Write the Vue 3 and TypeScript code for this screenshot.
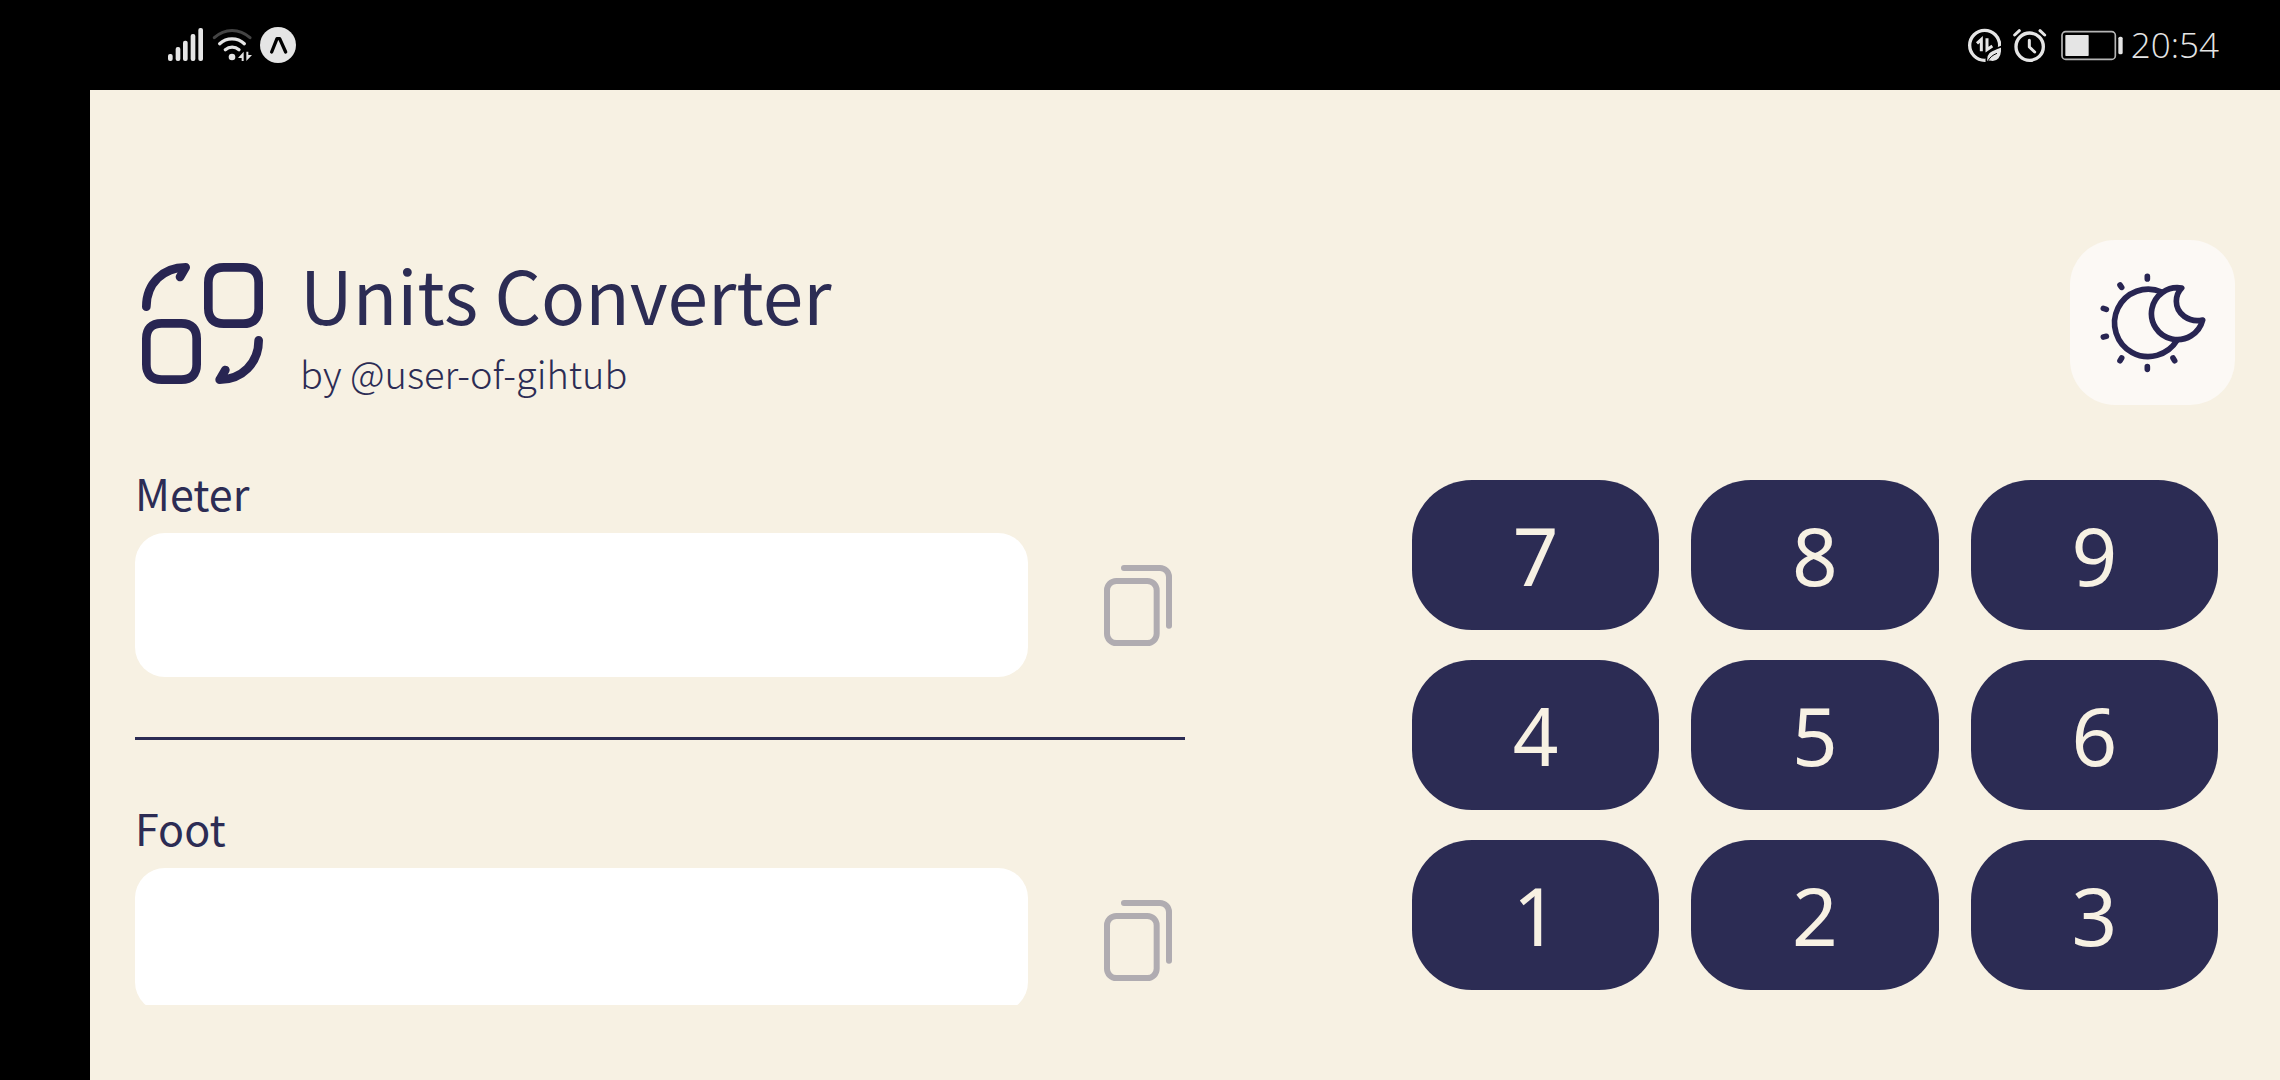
<script setup lang="ts">
import { ref } from 'vue'

interface Unit {
  id: string
  name: string
  factor: number
}

const units: Unit[] = [
  { id: 'meter', name: 'Meter', factor: 1 },
  { id: 'foot', name: 'Foot', factor: 0.3048 },
]

const keys: string[] = ['7', '8', '9', '4', '5', '6', '1', '2', '3']

const values = ref<Record<string, string>>({ meter: '', foot: '' })

function press(key: string): void {
  values.value.meter += key
  const meters = Number(values.value.meter)
  values.value.foot = String(meters / units[1].factor)
}

function copy(id: string): void {
  navigator.clipboard?.writeText(values.value[id])
}
</script>

<template>
  <div class="screen">
    <div class="status">
      <div class="status-group">
        <svg width="35" height="36" viewBox="54 51 105 108" fill="#e5e5e5" role="img" aria-label="Signal">
          <rect x="54" y="132" width="14" height="21" rx="6" />
          <rect x="77" y="111" width="14" height="42" rx="6" />
          <rect x="99" y="92" width="14" height="61" rx="6" />
          <rect x="122" y="72" width="14" height="81" rx="6" />
          <rect x="145" y="54" width="14" height="99" rx="6" />
        </svg>
        <svg width="41" height="36" viewBox="183 51 123 108" fill="none" stroke-linecap="round" role="img" aria-label="Wi-Fi">
          <path d="M193 83C224 54 268 54 300 83" stroke="#444" stroke-width="9" />
          <path d="M209 101C230 82 262 82 283 101" stroke="#e5e5e5" stroke-width="10" />
          <path d="M226 119C238 109 255 109 267 119" stroke="#e5e5e5" stroke-width="10" />
          <circle cx="246" cy="141" r="10" fill="#e5e5e5" />
          <path d="M281 125V153H275V144H264ZM289 125H295V135H306L289 153Z" fill="#e5e5e5" />
        </svg>
        <svg width="36" height="36" viewBox="330 51 108 108" fill="none" role="img" aria-label="Expo">
          <circle cx="384" cy="105" r="54" fill="#e5e5e5" />
          <path d="M365 126L381 86H389L407 126" stroke="#000" stroke-width="10" stroke-linecap="round" stroke-linejoin="round" />
        </svg>
      </div>
      <div class="status-group">
        <div class="indicators">
          <svg width="34" height="36" viewBox="78 51 102 108" fill="none" role="img" aria-label="Data saver">
            <circle cx="131" cy="106" r="45" stroke="#e5e5e5" stroke-width="10" />
            <path d="M108 100L121 88V124" stroke="#e5e5e5" stroke-width="9" />
            <path d="M138 85V119L154 108" stroke="#e5e5e5" stroke-width="9" />
            <path d="M137 158C130 122 160 120 182 109C186 142 170 160 146 154Z" fill="#e5e5e5" stroke="#000" stroke-width="5" />
            <path d="M139 156C146 142 155 135 168 130" stroke="#000" stroke-width="3" />
          </svg>
          <svg width="34" height="36" viewBox="216 51 102 108" fill="none" stroke="#e5e5e5" stroke-linecap="round" role="img" aria-label="Alarm">
            <circle cx="266" cy="110" r="41" stroke-width="10" />
            <path d="M221 75L235 62M297 62L311 75" stroke-width="9" />
            <path d="M265 91V111L281 126" stroke-width="9" stroke-linejoin="round" />
          </svg>
          <svg width="64" height="36" viewBox="354 51 192 108" role="img" aria-label="Battery">
            <rect x="363" y="65" width="160" height="83" rx="11" fill="none" stroke="#b5b5b5" stroke-width="5" />
            <rect x="373" y="75" width="70" height="63" rx="2" fill="#e5e5e5" />
            <rect x="532" y="80" width="13" height="53" rx="5" fill="#e5e5e5" />
          </svg>
        </div>
        <time class="clock">20:54</time>
      </div>
    </div>

    <div class="body">
      <div class="rail"></div>
      <main class="app">
        <header class="header">
          <svg class="logo" viewBox="66 69 363 363" fill="none" stroke="#282552" stroke-width="26" stroke-linecap="round" stroke-linejoin="round" aria-hidden="true">
            <path d="M79 200C79 130 130 82 197 82L180 111" />
            <path d="M416 301C416 370 365 419 299 419L316 390" />
            <path d="M311 82H370C401 82 416 99 416 128V205C416 234 401 251 370 251H311C280 251 265 234 265 205V128C265 99 280 82 311 82Z" />
            <path d="M125 250H184C215 250 230 267 230 296V373C230 402 215 419 184 419H125C94 419 79 402 79 373V296C79 267 94 250 125 250Z" />
          </svg>
          <div class="titles">
            <h1>Units Converter</h1>
            <p>by @user-of-gihtub</p>
          </div>
          <button class="theme" type="button" aria-label="Toggle theme">
            <svg width="106" height="100" viewBox="149 158 318 300" fill="none" stroke="#282552" stroke-width="17" stroke-linecap="round" stroke-linejoin="round" aria-hidden="true">
              <path d="M334 215A101 101 0 1 0 380 360" />
              <path d="M394 203A78 78 0 1 0 457 299C415 308 378 280 378 243C378 227 384 213 394 203Z" />
              <path d="M291 168V176M291 439V447M209 194L214 201M159 264L168 267M159 350L168 348M209 421L214 413M368 413L373 421" />
            </svg>
          </button>
        </header>

        <div class="columns">
          <section class="units">
            <div v-for="unit in units" :key="unit.id" class="unit">
              <label :for="unit.id">{{ unit.name }}</label>
              <div class="field">
                <input :id="unit.id" v-model="values[unit.id]" type="text" inputmode="none" />
                <button class="copy" type="button" :aria-label="`Copy ${unit.name}`" @click="copy(unit.id)">
                  <svg width="68" height="81" viewBox="372 195 204 243" fill="none" stroke="#b0acb1" stroke-width="18" stroke-linecap="round" aria-hidden="true">
                    <rect x="381" y="243" width="149" height="186" rx="28" />
                    <path d="M432 204H540A27 27 0 0 1 567 231V377" />
                  </svg>
                </button>
              </div>
            </div>
          </section>
          <section class="keypad" aria-label="Keypad">
            <button v-for="key in keys" :key="key" type="button" @click="press(key)">{{ key }}</button>
          </section>
        </div>
      </main>
    </div>
  </div>
</template>

<style>
body {
  background: #000;
}
</style>

<style scoped>
.screen {
  box-sizing: border-box;
  min-height: 100vh;
  display: flex;
  flex-direction: column;
  background: #000;
  color: #2c2c54;
  font-family: "Noto Sans CJK SC", "Noto Sans", sans-serif;
}

button {
  padding: 0;
  border: 0;
  background: none;
  font: inherit;
  cursor: pointer;
}

svg {
  display: block;
}

.status {
  display: flex;
  justify-content: space-between;
  align-items: center;
  height: 90px;
  padding: 0 61px 0 168px;
}

.status-group {
  display: flex;
  align-items: center;
  gap: 8px;
}

.indicators {
  display: flex;
  gap: 12px;
}

.clock {
  color: #e5e5e5;
  font-family: "Open Sans", sans-serif;
  font-size: 35px;
  font-weight: 300;
  line-height: 48px;
}

.body {
  flex: 1;
  display: flex;
}

.rail {
  flex: 0 0 90px;
}

.app {
  flex: 1;
  padding: 150px 45px 75px;
  background: #f7f1e3;
}

.header {
  display: flex;
  align-items: center;
  height: 165px;
}

.logo {
  width: 121px;
  height: 121px;
  margin: 2px 37px 0 7px;
}

.titles {
  flex: 1;
}

h1,
p {
  margin: 0;
}

h1 {
  font-size: 73px;
  font-weight: 400;
  line-height: 100px;
}

p {
  font-size: 38px;
  font-weight: 300;
  line-height: 60px;
}

.theme {
  display: flex;
  align-items: center;
  justify-content: center;
  width: 165px;
  height: 165px;
  border-radius: 45px;
  background: #fcf9f5;
}

.columns {
  display: flex;
  justify-content: space-between;
  height: 550px;
  margin-top: 50px;
}

.units {
  box-sizing: border-box;
  width: 50%;
  padding-top: 10px;
  overflow: hidden;
}

.unit + .unit {
  margin-top: 60px;
  border-top: 3px solid #2c2c54;
  padding-top: 60px;
}

label {
  display: block;
  margin-bottom: 14px;
  font-size: 43px;
  line-height: 54px;
}

.field {
  display: flex;
}

input {
  box-sizing: border-box;
  width: 85%;
  height: 144px;
  padding: 0 40px;
  border: 0;
  border-radius: 30px;
  background: #fff;
  color: inherit;
  font: inherit;
  font-size: 73px;
}

.copy {
  flex: 1;
  display: flex;
  align-items: center;
  justify-content: flex-end;
  padding-right: 13px;
}

.keypad {
  box-sizing: border-box;
  width: 40%;
  display: grid;
  grid-template-columns: repeat(3, 1fr);
  grid-auto-rows: 150px;
  gap: 30px 32px;
  padding: 25px 17px 15px;
}

.keypad button {
  border-radius: 60px;
  background: #2c2c54;
  color: #f7f1e3;
  font-family: "Noto Sans", sans-serif;
  font-size: 80px;
  line-height: 96px;
}
</style>
